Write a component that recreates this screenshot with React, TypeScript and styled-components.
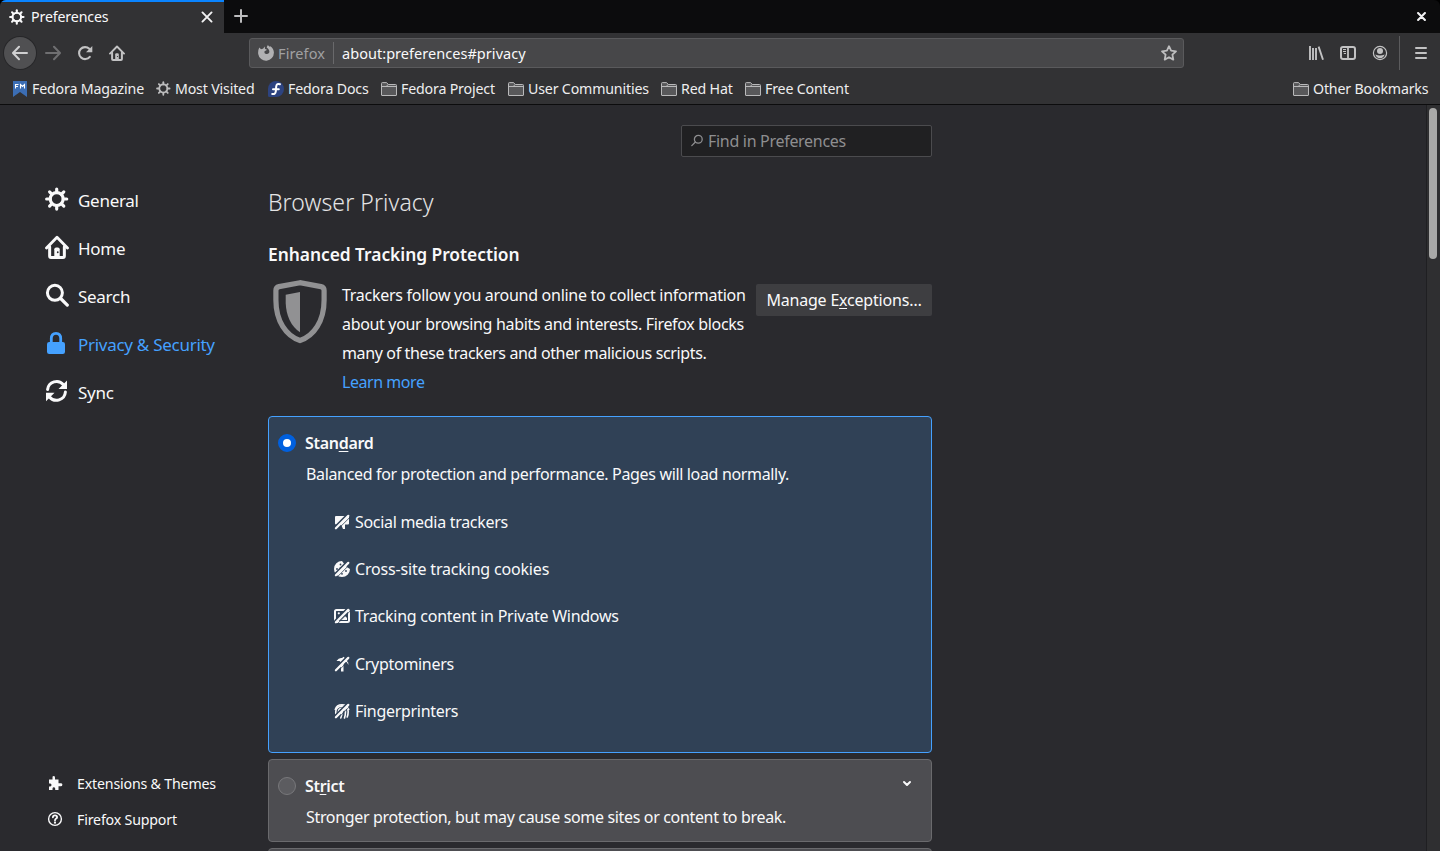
import React from "react";
import styled, { createGlobalStyle, css } from "styled-components";

const color = {
  frame: "#0c0c0d",
  toolbar: "#323234",
  page: "#2a2a2e",
  text: "#f9f9fa",
  chromeText: "#eeeeef",
  chromeIcon: "#c2c2c3",
  dim: "#a0a0a2",
  accent: "#45a1ff",
  selected: "#304156",
  card: "#4d4d51",
};

const GlobalStyle = createGlobalStyle`
  * { box-sizing: border-box; }
  body {
    margin: 0;
    background: ${color.page};
    color: ${color.text};
    font-family: "Noto Sans", "Open Sans", sans-serif;
    overflow: hidden;
  }
  svg { display: block; flex: none; }
`;

const Window = styled.div`
  display: flex;
  flex-direction: column;
  width: 1440px;
  height: 851px;
  overflow: hidden;
  background: #000;
`;

/* ---------- browser chrome ---------- */

const TabStrip = styled.div`
  display: flex;
  flex: none;
  height: 33px;
  background: ${color.frame};
  border-radius: 6px 6px 0 0;
  overflow: hidden;
`;

const Tab = styled.div`
  display: flex;
  align-items: center;
  width: 224px;
  padding: 0 11px 1px 9px;
  background: ${color.toolbar};
  border-top: 2px solid #0a84ff;
  color: ${color.text};
  font-size: 14.2px;
  letter-spacing: -0.14px;
`;

const TabTitle = styled.span`
  flex: 1;
  margin: 0 0 1px 6px;
`;

const NewTab = styled.div`
  display: flex;
  align-items: center;
  padding: 0 0 1px 9px;
  flex: 1;
`;

const WindowClose = styled.div`
  display: flex;
  align-items: center;
  padding-right: 14px;
`;

const NavBar = styled.div`
  display: flex;
  align-items: center;
  flex: none;
  height: 40px;
  padding: 0 12px 0 4px;
  background: ${color.toolbar};
`;

const BackButton = styled.div`
  display: flex;
  align-items: center;
  justify-content: center;
  width: 32px;
  height: 32px;
  border-radius: 50%;
  background: #505052;
  box-shadow: 0 0 0 1px #272729;
`;

const NavIcons = styled.div`
  display: flex;
  gap: 16px;
  margin-left: 9px;
  width: 204px;
`;

const UrlBar = styled.div`
  display: flex;
  align-items: center;
  width: 935px;
  height: 30px;
  padding: 0 6px 0 8px;
  border: 1px solid #5a5a5c;
  border-radius: 3px;
  background: #474749;
  font-size: 14.5px;
`;

const Identity = styled.div`
  display: flex;
  align-items: center;
  gap: 4px;
  width: 76px;
  height: 22px;
  border-right: 1px solid #69696b;
  color: ${color.dim};
  letter-spacing: 0.12px;
`;

const Url = styled.span`
  flex: 1;
  margin-left: 8px;
  color: ${color.text};
  letter-spacing: 0.04px;
`;

const ToolIcons = styled.div`
  display: flex;
  align-items: center;
  gap: 16px;
  margin-left: auto;
  padding-right: 11px;
  height: 34px;
  border-right: 1px solid #5b5b5d;
  margin-right: 14px;
`;

const Bookmarks = styled.div`
  display: flex;
  align-items: center;
  gap: 12px;
  flex: none;
  height: 32px;
  padding: 0 12px 0 12px;
  background: ${color.toolbar};
  border-bottom: 1px solid ${color.frame};
`;

const Bookmark = styled.div<{ $width: number; $end?: boolean }>`
  display: flex;
  align-items: center;
  gap: 4px;
  width: ${(p) => p.$width + 20}px;
  margin-left: ${(p) => (p.$end ? "auto" : "0")};
  color: ${color.chromeText};
  font-size: 14.2px;
  letter-spacing: -0.17px;
  white-space: nowrap;
`;

/* ---------- preferences page ---------- */

const Page = styled.div`
  display: flex;
  flex: 1;
  min-height: 0;
  background: ${color.page};
`;

const Sidebar = styled.nav`
  display: flex;
  flex-direction: column;
  justify-content: space-between;
  width: 268px;
  padding: 71px 0 14px 45px;
`;

const Category = styled.div<{ $active?: boolean }>`
  display: flex;
  align-items: center;
  gap: 9px;
  height: 48px;
  font-size: 17px;
  letter-spacing: -0.28px;
  color: ${(p) => (p.$active ? color.accent : color.text)};
  svg {
    margin-bottom: 2px;
  }
`;

const SideLink = styled.div`
  display: flex;
  align-items: center;
  gap: 14px;
  height: 36px;
  padding-left: 2px;
  font-size: 14.2px;
  letter-spacing: -0.18px;
`;

const Main = styled.main`
  display: flex;
  flex-direction: column;
  width: 664px;
  padding-top: 20px;
  font-size: 16px;
  letter-spacing: -0.3px;
`;

const SearchBox = styled.div`
  display: flex;
  align-items: center;
  align-self: flex-end;
  gap: 4px;
  flex: none;
  width: 251px;
  height: 32px;
  padding-left: 8px;
  border: 1px solid #4b4b4e;
  border-radius: 2px;
  background: #202022;
  color: #8e8e90;
`;

const Title = styled.h1`
  margin: 26px 0 0;
  height: 38px;
  font-size: 23px;
  font-weight: 300;
  line-height: 38px;
  letter-spacing: 0.08px;
  color: #e4e4e5;
`;

const SectionTitle = styled.h2`
  margin: 18px 0 0;
  height: 30px;
  font-size: 17.4px;
  font-weight: 600;
  line-height: 30px;
  letter-spacing: -0.04px;
`;

const Intro = styled.div`
  display: flex;
  flex: none;
  align-items: flex-start;
  height: 147px;
  padding: 11px 0 0 5px;
`;

const IntroText = styled.div`
  display: flex;
  flex-direction: column;
  width: 414px;
  margin: 1px 0 0 15px;
`;

const Line = styled.span<{ $tracking: number }>`
  height: 29px;
  line-height: 29px;
  white-space: nowrap;
  letter-spacing: ${(p) => p.$tracking}px;
`;

const Link = styled.a`
  color: ${color.accent};
`;

const Button = styled.button`
  width: 176px;
  height: 32px;
  margin-top: 4px;
  padding: 0;
  border: 0;
  border-radius: 2px;
  background: #3e3e41;
  color: ${color.text};
  font: inherit;
  letter-spacing: -0.2px;
`;

const Card = styled.section<{ $height: number; $selected?: boolean }>`
  flex: none;
  height: ${(p) => p.$height}px;
  margin-bottom: 6px;
  padding: 10px 9px;
  border: 1px solid #6a6a6d;
  border-radius: 4px;
  background: ${color.card};
  ${(p) =>
    p.$selected &&
    css`
      border-color: ${color.accent};
      background: ${color.selected};
    `}
`;

const CardHead = styled.div`
  display: flex;
  align-items: center;
  height: 31px;
  font-weight: 600;
  letter-spacing: -0.3px;
`;

const Radio = styled.span<{ $on?: boolean }>`
  width: 18px;
  height: 18px;
  margin-right: 9px;
  border-radius: 50%;
  border: 1px solid #78787b;
  background: #5c5c60;
  ${(p) =>
    p.$on &&
    css`
      border: 5px solid #0060df;
      background: #fff;
    `}
`;

const Key = styled.span`
  text-decoration: underline;
  text-decoration-thickness: 1px;
  text-underline-offset: 2px;
`;

const Chevron = styled.span`
  margin: 0 10px 4px auto;
`;

const CardText = styled.p`
  height: 31px;
  margin: 1px 0 0 28px;
  line-height: 31px;
  letter-spacing: -0.34px;
`;

const Trackers = styled.ul`
  margin: 8px 0 0 56px;
  padding: 0;
  list-style: none;
`;

const Tracker = styled.li<{ $tracking: number }>`
  display: flex;
  align-items: center;
  gap: 5px;
  height: 47.4px;
  letter-spacing: ${(p) => p.$tracking}px;
`;

const ScrollTrack = styled.div`
  width: 14px;
  margin-left: auto;
  padding: 3px 0 0 2px;
  border-left: 1px solid #1f1f22;
  background: #2f2f31;
`;

const ScrollThumb = styled.div`
  width: 8px;
  height: 151px;
  border-radius: 4px;
  background: #a9a9a8;
`;

/* ---------- icons ---------- */

const Gear = ({ size, fill, w = 2.1 }: { size: number; fill: string; w?: number }) => (
  <svg width={size} height={size} viewBox="0 0 16 16" fill="none" stroke={fill} strokeWidth={w}>
    <circle cx="7.800" cy="8" r="4.300" />
    {[0, 45, 90, 135, 180, 225, 270, 315].map((a) => (
      <path key={a} d="M7.800 3.600V1.300" strokeLinecap="round" transform={`rotate(${a} 7.800 8)`} />
    ))}
  </svg>
);

const House = ({ size, fill, hole }: { size: number; fill: string; hole: string }) => (
  <svg width={size} height={size} viewBox="0 0 16 16" fill="none" stroke={fill} strokeLinecap="round" strokeLinejoin="round">
    <path d="M1 8.600 8 1.500l7 7.100" strokeWidth="1.900" />
    <path d="M3.100 7.800V14q0 1 .9 1h8q.9 0 .9-1V7.800" strokeWidth="2" />
    <path d="M6.200 15V9.500q0-1.200 1.200-1.200h1.200q1.200 0 1.200 1.200V15Z" fill={fill} stroke="none" />
    <circle cx="8.500" cy="11.500" r=".6" fill={hole} stroke="none" />
  </svg>
);

const Folder = () => (
  <svg width="16" height="16" viewBox="0 0 16 16" fill="#58585a" stroke="#b9b9ba">
    <path d="M.5 14V2.500q0-.9.9-.9H5.600l1.700 1.900h7.300q.9 0 .9.9V14q0 .5-.5.5H1q-.5 0-.5-.5Z" />
    <path d="M.5 5.500h4.800l1.700-2" fill="none" />
    <path d="M5 5.500h10.500" fill="none" />
  </svg>
);

const Arrow = ({ stroke, flip }: { stroke: string; flip?: boolean }) => (
  <svg width="16" height="16" viewBox="0 0 16 16" fill="none" stroke={stroke} strokeWidth="2" strokeLinecap="round" strokeLinejoin="round">
    <g transform={flip ? "matrix(-1 0 0 1 16 0)" : undefined}>
      <path d="M15 8H1.500M7 1.800 1 8l6 6.200" />
    </g>
  </svg>
);

const Reload = () => (
  <svg width="16" height="16" viewBox="0 0 16 16" fill="none">
    <path d="M12.800 11.800A6 6 0 1 1 12.300 3.800" stroke={color.chromeIcon} strokeWidth="2.100" strokeLinecap="round" />
    <path d="M15.300 1v6.300H9Z" fill={color.chromeIcon} />
  </svg>
);

const FirefoxMark = () => (
  <svg width="16" height="16" viewBox="0 0 16 16">
    <path
      fill="#b1b1b3"
      d="M1.300 2.600 3 4.200Q4 3.600 5 3.700L6.800 1.600 7 4Q8.700 4.200 8.800 5L6.600 6.300Q6 8 7.500 8.700 9.500 9.500 11 8q.8-1.600-.2-3.300Q10 3.300 8.700 2.500L9.600.3q1.200.4 2 1.500l.8-.5q3.400 2.300 3.500 6.300A7.900 7.900 0 0 1 .2 9Q-.2 5.500 1.300 2.600Z"
    />
  </svg>
);

const Star = () => (
  <svg width="16" height="16" viewBox="0 0 16 16" fill="none" stroke="#bdbdbe" strokeWidth="1.800" strokeLinejoin="round">
    <path d="m8 1.200 2.100 4.500 4.900.6-3.600 3.400.9 4.900L8 12.200l-4.300 2.400.9-4.900L1 6.300l4.900-.6Z" />
  </svg>
);

const Library = () => (
  <svg width="16" height="16" viewBox="0 0 16 16" fill="none" stroke={color.chromeIcon} strokeWidth="1.900">
    <path d="M2 1v14M5 3v12M8 3v12M10.600 1.600 15 14.700" />
  </svg>
);

const SidebarIcon = () => (
  <svg width="16" height="16" viewBox="0 0 16 16" fill="none" stroke={color.chromeIcon}>
    <rect x="1" y="2" width="14" height="12" rx="2" strokeWidth="2" />
    <path d="M8 2v12" strokeWidth="1.800" />
    <path d="M3 4.500h3M3 6.500h3M3.800 8.500H6" strokeWidth="1" />
  </svg>
);

const Account = () => (
  <svg width="16" height="16" viewBox="0 0 16 16" fill="none">
    <circle cx="8" cy="8" r="6.600" stroke={color.chromeIcon} strokeWidth="1.200" />
    <circle cx="8" cy="6" r="3" fill={color.chromeIcon} />
    <path d="M3.300 9.500Q8 11.500 12.700 9.500 11.500 13.200 8 13.200T3.300 9.500Z" fill={color.chromeIcon} />
  </svg>
);

const Menu = () => (
  <svg width="14" height="16" viewBox="0 0 14 16" stroke={color.chromeIcon} strokeWidth="2" strokeLinecap="round">
    <path d="M2 3h10M2 8h10M2 13h10" />
  </svg>
);

const Cross = ({ size, w }: { size: number; w: number }) => (
  <svg width={size} height={size} viewBox="0 0 10 10" stroke="#f2f2f3" strokeWidth={w} strokeLinecap="round">
    <path d="m1.200 1.200 7.600 7.600M8.800 1.200 1.200 8.800" />
  </svg>
);

const Plus = () => (
  <svg width="16" height="16" viewBox="0 0 16 16" stroke="#bdbdbe" strokeWidth="2" strokeLinecap="round">
    <path d="M8 2v12M2 8h12" />
  </svg>
);

const MagazineMark = () => (
  <svg width="16" height="16" viewBox="0 0 16 16">
    <path d="M1 0h14v16l-7-5-7 5Z" fill="#3c6eb4" />
    <path d="M3.500 7.500V3.500h3M3.500 5.500h2.500M8.500 7.500v-4l2 2 2-2v4" fill="none" stroke="#fff" strokeWidth="1.100" />
  </svg>
);

const FedoraMark = () => (
  <svg width="16" height="16" viewBox="0 0 16 16">
    <path d="M8 0a8 8 0 1 1 0 16H1.500Q0 16 0 14.500V8a8 8 0 0 1 8-8Z" fill="#2d4380" />
    <path d="M12 3.200Q8.700 2 8.200 5.500L7.800 10.300Q7.300 13.700 4.200 13M5 8.200h5.800" fill="none" stroke="#fff" strokeWidth="2" strokeLinecap="round" />
  </svg>
);

const SearchLarge = () => (
  <svg width="24" height="24" viewBox="0 0 24 24" fill="none" stroke={color.text} strokeLinecap="round">
    <circle cx="9.900" cy="9.800" r="7.500" strokeWidth="3" />
    <path d="m15.700 15.500 6.600 6.600" strokeWidth="3.200" />
  </svg>
);

const Lock = () => (
  <svg width="24" height="24" viewBox="0 0 24 24">
    <rect x="2" y="11" width="18" height="12" rx="2.200" fill={color.accent} />
    <path d="M6.300 12V7.500q0-5.200 4.700-5.200t4.700 5.200V12" fill="none" stroke={color.accent} strokeWidth="2.800" />
  </svg>
);

const SyncIcon = () => (
  <svg width="24" height="24" viewBox="0 0 24 24" fill="none" stroke={color.text} strokeWidth="3" strokeLinecap="round">
    <path d="M2.600 10.500A9 9 0 0 1 18.500 5.800M20.400 13A9 9 0 0 1 4.500 18" />
    <path d="M22 1.500V10h-8.500ZM1 22.300v-8.500h8.500Z" fill={color.text} stroke="none" />
  </svg>
);

const Puzzle = () => (
  <svg width="16" height="16" viewBox="0 0 16 16" fill={color.text}>
    <path d="M2 4.500h3.500V3.200Q5 1 6.700 1T8 3.200v1.300h3.500v3.800h1.700q2.200-.3 2.200 1.400t-2.200 1.500h-1.700V15H8.200v-1.500q-.3-1.300-1.400-1.300t-1.300 1.300V15H2v-3.600h1.200q1.300-.3 1.300-1.400T3.200 8.600H2Z" />
  </svg>
);

const Help = () => (
  <svg width="16" height="16" viewBox="0 0 16 16" fill="none" stroke={color.text}>
    <circle cx="8" cy="8" r="6.400" strokeWidth="1.400" />
    <path d="M5.900 6.300Q6 4.300 8 4.300t2.100 1.800Q10 7.200 8.900 7.800 8 8.300 8 9.500" strokeWidth="1.800" strokeLinecap="round" />
    <circle cx="8" cy="11.700" r="1.100" fill={color.text} stroke="none" />
  </svg>
);

const Glass = () => (
  <svg width="14" height="14" viewBox="0 0 14 14" fill="none" stroke="#8e8e90" strokeWidth="1.300" strokeLinecap="round">
    <circle cx="8.300" cy="5.200" r="3.900" />
    <path d="m5.400 8-3.600 3.600" />
  </svg>
);

const Shield = () => (
  <svg width="54" height="64" viewBox="0 0 54 64">
    <path
      d="M27 2.700 6 6.600Q2.900 7.300 2.900 10.500V20C2.900 41 13 56 27 60.500 41 56 51.100 41 51.100 20V10.500Q51.100 7.300 48 6.600Z"
      fill="none"
      stroke="#919193"
      strokeWidth="5.200"
    />
    <path d="M27 12 12.700 14.700V23Q13.500 43 27 52.300Z" fill="#919193" />
  </svg>
);

/* The diagonal that crosses every blocked-tracker icon, with a gap on its upper side. */
const Slash = () => (
  <>
    <path d="M-.5 14.500 14.500-.5" stroke={color.selected} strokeWidth="2.200" fill="none" />
    <path d="M2.700 16.500 16.500 2.700" stroke={color.selected} strokeWidth=".8" fill="none" />
    <path d="M1.900 14.300 14.300 1.900" stroke={color.text} strokeWidth="2.200" strokeLinecap="round" fill="none" />
  </>
);

const trackerIcons: Record<string, React.ReactNode> = {
  social: <path d="M2 2h12q1 0 1 1v6.500q0 1-1 1h-3V15H9l-2-4.500H2q-1 0-1-1V3q0-1 1-1Z" fill={color.text} />,
  cookie: (
    <>
      <path d="M8 0a8 8 0 0 0-8 8 8 8 0 0 0 8 8 8 8 0 0 0 8-8l-2.500-1.500L11 4 9.500 2Z" fill={color.text} />
      <g fill={color.selected}>
        <circle cx="6.500" cy="3.500" r=".9" />
        <circle cx="3" cy="8" r=".9" />
        <circle cx="6.300" cy="7" r=".8" />
        <circle cx="8" cy="12.800" r=".9" />
        <circle cx="12" cy="10" r=".9" />
      </g>
    </>
  ),
  content: (
    <>
      <rect x="1" y="2" width="14" height="12" rx="1.500" fill="none" stroke={color.text} strokeWidth="2" />
      <circle cx="4.800" cy="5.300" r="1.100" fill={color.text} />
      <path d="m6.500 12 4.500-4 2 2v2Z" fill={color.text} />
    </>
  ),
  miner: <path d="M2.500 5Q5 1.300 8 2L9.500.8 12 3q2.500 2.500 2.500 6-1-2.500-3-3.500L9.500 7v8.500H7V6.500L5.500 5Z" fill={color.text} />,
  finger: (
    <path
      d="M1.300 6.500A6.900 6.200 0 0 1 14.700 6.500M1.800 11V8.500a6.200 5.300 0 0 1 12.400 0q0 3-1 5.500M4.500 11V8.500a3.500 3.300 0 0 1 7 0q0 3.500-1 6.500M8 8.500q0 4-1.200 6.500"
      stroke={color.text}
      strokeWidth="1.600"
      strokeLinecap="round"
      fill="none"
    />
  ),
};

const bookmarks: [string, number, React.ReactNode][] = [
  ["Fedora Magazine", 112, <MagazineMark />],
  ["Most Visited", 80, <Gear size={15} fill="#bdbdbe" w={1.9} />],
  ["Fedora Docs", 81, <FedoraMark />],
  ["Fedora Project", 95, <Folder />],
  ["User Communities", 121, <Folder />],
  ["Red Hat", 52, <Folder />],
  ["Free Content", 85, <Folder />],
];

const trackers: [string, string, number][] = [
  ["social", "Social media trackers", -0.3],
  ["cookie", "Cross-site tracking cookies", -0.18],
  ["content", "Tracking content in Private Windows", -0.25],
  ["miner", "Cryptominers", -0.3],
  ["finger", "Fingerprinters", -0.3],
];

export default function App() {
  return (
    <Window>
      <GlobalStyle />
      <TabStrip>
        <Tab>
          <Gear size={16} fill={color.text} />
          <TabTitle>Preferences</TabTitle>
          <Cross size={12} w={1.600} />
        </Tab>
        <NewTab>
          <Plus />
        </NewTab>
        <WindowClose>
          <Cross size={9} w={2.300} />
        </WindowClose>
      </TabStrip>

      <NavBar>
        <BackButton>
          <Arrow stroke="#d0d0d1" />
        </BackButton>
        <NavIcons>
          <Arrow stroke="#6f6f71" flip />
          <Reload />
          <House size={16} fill={color.chromeIcon} hole={color.toolbar} />
        </NavIcons>
        <UrlBar>
          <Identity>
            <FirefoxMark />
            Firefox
          </Identity>
          <Url>about:preferences#privacy</Url>
          <Star />
        </UrlBar>
        <ToolIcons>
          <Library />
          <SidebarIcon />
          <Account />
        </ToolIcons>
        <Menu />
      </NavBar>

      <Bookmarks>
        {bookmarks.map(([label, width, icon]) => (
          <Bookmark key={label} $width={width}>
            {icon}
            {label}
          </Bookmark>
        ))}
        <Bookmark $width={115} $end>
          <Folder />
          Other Bookmarks
        </Bookmark>
      </Bookmarks>

      <Page>
        <Sidebar>
          <div>
            <Category>
              <Gear size={24} fill={color.text} />
              General
            </Category>
            <Category>
              <House size={24} fill={color.text} hole={color.page} />
              Home
            </Category>
            <Category>
              <SearchLarge />
              Search
            </Category>
            <Category $active>
              <Lock />
              Privacy &amp; Security
            </Category>
            <Category>
              <SyncIcon />
              Sync
            </Category>
          </div>
          <div>
            <SideLink>
              <Puzzle />
              Extensions &amp; Themes
            </SideLink>
            <SideLink>
              <Help />
              Firefox Support
            </SideLink>
          </div>
        </Sidebar>

        <Main>
          <SearchBox>
            <Glass />
            Find in Preferences
          </SearchBox>
          <Title>Browser Privacy</Title>
          <SectionTitle>Enhanced Tracking Protection</SectionTitle>
          <Intro>
            <Shield />
            <IntroText>
              <Line $tracking={-0.28}>Trackers follow you around online to collect information</Line>
              <Line $tracking={-0.33}>about your browsing habits and interests. Firefox blocks</Line>
              <Line $tracking={-0.36}>many of these trackers and other malicious scripts.</Line>
              <Line $tracking={-0.45}>
                <Link>Learn more</Link>
              </Line>
            </IntroText>
            <Button>
              Manage E<Key>x</Key>ceptions…
            </Button>
          </Intro>
          <Card $height={337} $selected>
            <CardHead>
              <Radio $on />
              <span>
                Stan<Key>d</Key>ard
              </span>
            </CardHead>
            <CardText>Balanced for protection and performance. Pages will load normally.</CardText>
            <Trackers>
              {trackers.map(([id, label, tracking]) => (
                <Tracker key={id} $tracking={tracking}>
                  <svg width="16" height="16" viewBox="0 0 16 16">
                    {trackerIcons[id]}
                    <Slash />
                  </svg>
                  {label}
                </Tracker>
              ))}
            </Trackers>
          </Card>
          <Card $height={83}>
            <CardHead>
              <Radio />
              <span>
                St<Key>r</Key>ict
              </span>
              <Chevron>
                <svg width="10" height="7" viewBox="0 0 10 7" fill="none" stroke={color.text} strokeWidth="2" strokeLinecap="round" strokeLinejoin="round">
                  <path d="m2 2 3 3 3-3" />
                </svg>
              </Chevron>
            </CardHead>
            <CardText>Stronger protection, but may cause some sites or content to break.</CardText>
          </Card>
          <Card $height={83} />
        </Main>

        <ScrollTrack>
          <ScrollThumb />
        </ScrollTrack>
      </Page>
    </Window>
  );
}
